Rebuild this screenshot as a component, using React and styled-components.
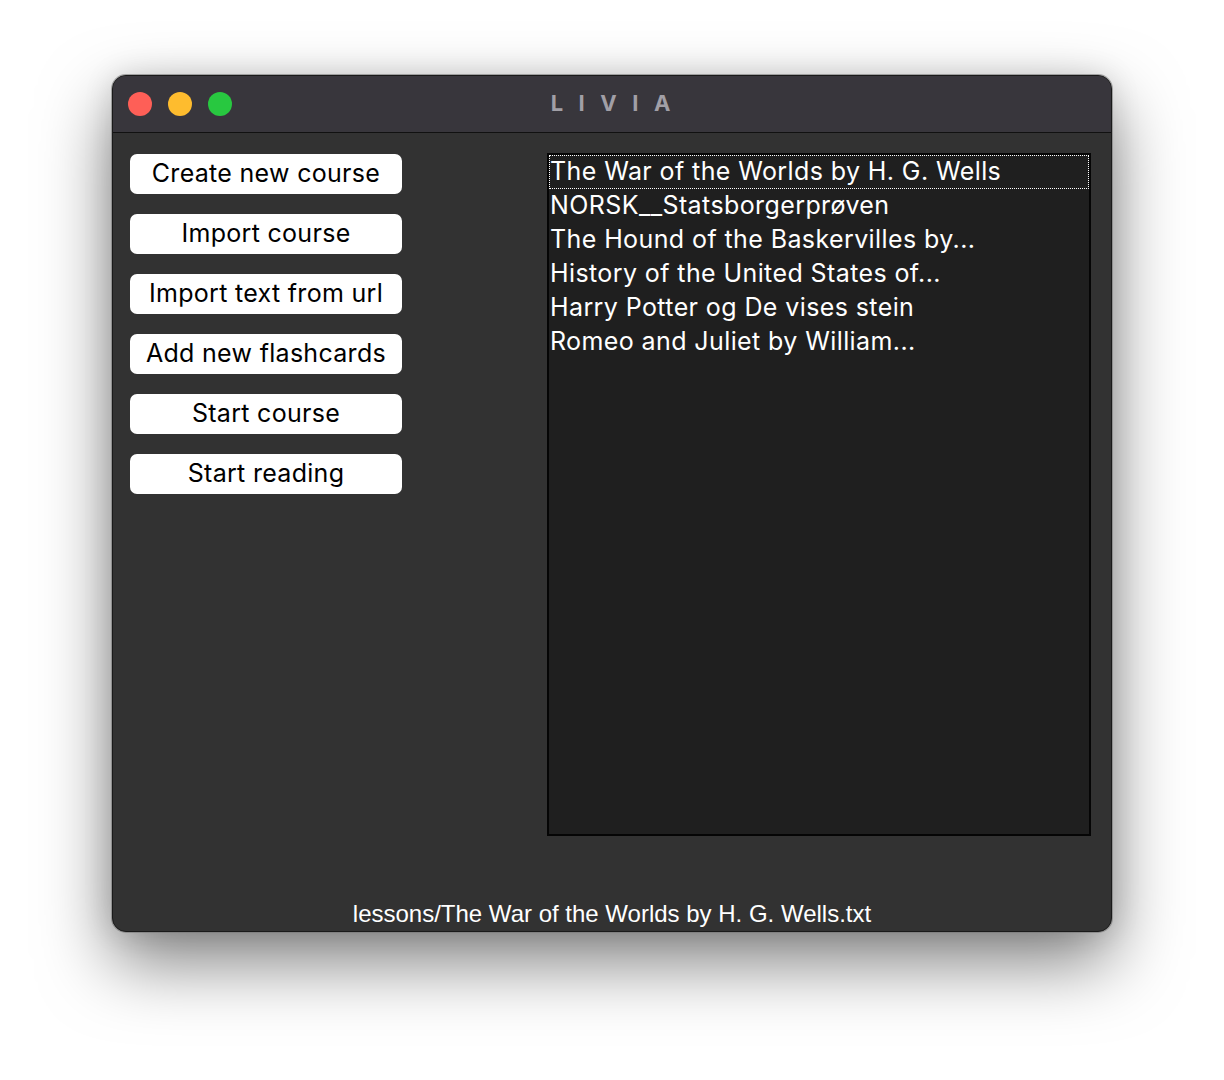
import React from 'react';
import styled, { createGlobalStyle } from 'styled-components';

const GlobalStyle = createGlobalStyle`
  html, body {
    margin: 0;
    padding: 0;
    background: #ffffff;
    min-height: 100vh;
  }
  #root {
    padding: 75px 0 140px 112px;
  }
`;

const buttons = [
  'Create new course',
  'Import course',
  'Import text from url',
  'Add new flashcards',
  'Start course',
  'Start reading',
];

const lessons = [
  'The War of the Worlds by H. G. Wells',
  'NORSK__Statsborgerprøven',
  'The Hound of the Baskervilles by...',
  'History of the United States of...',
  'Harry Potter og De vises stein',
  'Romeo and Juliet by William...',
];

const App = () => {
  return (
    <>
      <GlobalStyle />
      <Window>
        <TitleBar>
          <Lights>
            <Light color="#fe5f57" />
            <Light color="#febc2e" />
            <Light color="#28c840" />
          </Lights>
          <Title>LIVIA</Title>
        </TitleBar>
        <Body>
          <Menu>
            {buttons.map((b) => (
              <MenuButton key={b}>{b}</MenuButton>
            ))}
          </Menu>
          <LessonList>
            {lessons.map((l, i) => (
              <LessonItem key={l} focused={i === 0 ? 1 : 0}>
                {l}
              </LessonItem>
            ))}
          </LessonList>
        </Body>
        <StatusLine>lessons/The War of the Worlds by H. G. Wells.txt</StatusLine>
      </Window>
    </>
  );
};

export default App;

const Window = styled.div`
  width: 1000px;
  height: 857px;
  box-sizing: border-box;
  display: flex;
  flex-direction: column;
  background: #323232;
  border: 1px solid #1a1a1a;
  border-radius: 14px;
  overflow: hidden;
  box-shadow: 0 0 0 1px rgba(120, 120, 120, 0.6), 0 0 30px rgba(0, 0, 0, 0.12),
    0 30px 70px rgba(0, 0, 0, 0.5);
`;

const TitleBar = styled.div`
  position: relative;
  height: 56px;
  flex-shrink: 0;
  display: flex;
  align-items: center;
  justify-content: center;
  background: #38363c;
  border-bottom: 1px solid #111111;
`;

const Lights = styled.div`
  position: absolute;
  left: 15px;
  top: 16px;
  display: flex;
  gap: 16px;
`;

const Light = styled.span`
  width: 24px;
  height: 24px;
  border-radius: 50%;
  background: ${(p) => p.color};
`;

const Title = styled.div`
  font-family: Inter, 'Noto Sans', sans-serif;
  font-weight: 700;
  font-size: 22px;
  letter-spacing: 15.5px;
  margin-right: -15.5px;
  margin-left: -3px;
  margin-top: -2px;
  color: #a19fa6;
`;

const Body = styled.div`
  flex: 1;
  display: flex;
  justify-content: space-between;
  padding: 20px 20px 0 17px;
`;

const Menu = styled.div`
  width: 272px;
  display: flex;
  flex-direction: column;
  gap: 20px;
  padding-top: 1px;
`;

const MenuButton = styled.button`
  height: 40px;
  border: none;
  border-radius: 7px;
  background: #ffffff;
  color: #000000;
  font-family: Inter, 'Noto Sans', sans-serif;
  font-size: 25px;
  letter-spacing: 0.3px;
  padding: 0 0 2px;
  line-height: 38px;
  cursor: pointer;
`;

const LessonList = styled.div`
  width: 544px;
  height: 683px;
  box-sizing: border-box;
  background: #1f1f1f;
  border: 2px solid #050505;
  display: flex;
  flex-direction: column;
`;

const LessonItem = styled.div`
  height: 34px;
  line-height: 31px;
  box-sizing: border-box;
  padding-left: 0;
  font-family: Inter, 'Noto Sans', sans-serif;
  font-size: 25px;
  letter-spacing: 0.4px;
  color: #ffffff;
  white-space: nowrap;
  border: 1px dotted ${(p) => (p.focused ? '#ffffff' : 'transparent')};
`;

const StatusLine = styled.div`
  height: 96px;
  display: flex;
  align-items: flex-end;
  justify-content: center;
  padding-bottom: 3px;
  box-sizing: border-box;
  font-family: 'Liberation Sans', Arial, sans-serif;
  font-size: 24px;
  color: #ffffff;
`;
